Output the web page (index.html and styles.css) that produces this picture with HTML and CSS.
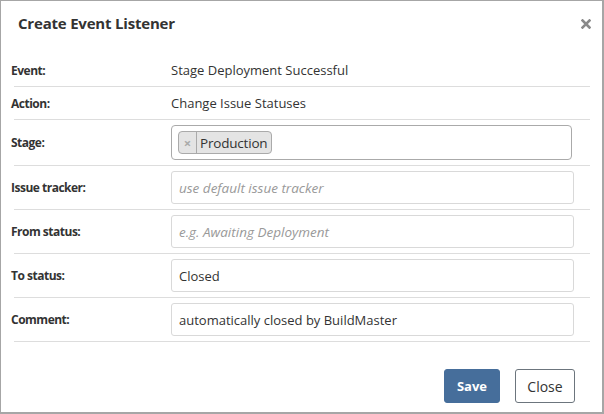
FILE: index.html
```html
<!DOCTYPE html>
<html>
<head>
<meta charset="utf-8">
<link rel="stylesheet" href="styles.css">
</head>
<body>
<div class="dialog">
  <div class="header">
    <h1 class="title">Create Event Listener</h1>
    <svg class="close-x" width="10" height="10" viewBox="0 0 10 10"><path d="M1.5 1.5 L8.5 8.5 M8.5 1.5 L1.5 8.5" stroke="#8a8a8a" stroke-width="2.6" stroke-linecap="square"/></svg>
  </div>
  <div class="body">
    <div class="row text-row">
      <label class="lbl">Event:</label>
      <div class="val">Stage Deployment Successful</div>
    </div>
    <div class="row text-row">
      <label class="lbl">Action:</label>
      <div class="val">Change Issue Statuses</div>
    </div>
    <div class="row">
      <label class="lbl">Stage:</label>
      <div class="val">
        <div class="multi">
          <span class="tag"><span class="tag-x">×</span><span class="tag-text">Production</span></span>
        </div>
      </div>
    </div>
    <div class="row">
      <label class="lbl">Issue tracker:</label>
      <div class="val"><div class="input placeholder">use default issue tracker</div></div>
    </div>
    <div class="row">
      <label class="lbl">From status:</label>
      <div class="val"><div class="input placeholder">e.g. Awaiting Deployment</div></div>
    </div>
    <div class="row">
      <label class="lbl">To status:</label>
      <div class="val"><div class="input">Closed</div></div>
    </div>
    <div class="row">
      <label class="lbl">Comment:</label>
      <div class="val"><div class="input">automatically closed by BuildMaster</div></div>
    </div>
  </div>
  <div class="footer">
    <button class="btn btn-primary">Save</button>
    <button class="btn btn-default">Close</button>
  </div>
</div>
</body>
</html>
```
FILE: styles.css
```css
* { box-sizing: border-box; }
html, body { margin: 0; padding: 0; background: #fff; }
body { font-family: "Open Sans", "Noto Sans", sans-serif; color: #333; }
.dialog {
  width: 604px;
  height: 414px;
  border: 1px solid #a6a6a6;
  border-bottom-width: 2px;
  border-right-width: 2px;
  display: flex;
  flex-direction: column;
}
.header {
  display: flex;
  align-items: center;
  justify-content: space-between;
  height: 44px;
  padding: 0 11px 0 17px;
}
.title {
  margin: 0;
  font-size: 15px;
  font-weight: bold;
  color: #333;
  letter-spacing: -0.2px;
}
.close-x {
  display: block;
  margin-top: 1px;
}
.body {
  padding: 9px 12px 0 13px;
}
.row {
  display: flex;
  align-items: center;
  padding: 5px 0;
  border-bottom: 1px solid #ddd;
}
.text-row { height: 33px; padding: 0; }
.lbl {
  width: 160px;
  margin-left: -3px;
  font-size: 12px;
  font-weight: bold;
  color: #333;
  letter-spacing: -0.5px;
}
.val {
  flex: 1;
  font-size: 13px;
  color: #333;
  padding-right: 16px;
}
.input {
  height: 33px;
  border: 1px solid #d9d9d9;
  border-radius: 3px;
  padding: 0 7px;
  display: flex;
  align-items: center;
  font-size: 13px;
}
.placeholder { color: #999; font-style: italic; font-size: 13.5px; }
.multi {
  height: 35px;
  border: 1px solid #aaa;
  border-radius: 4px;
  margin-right: 2px;
  display: flex;
  align-items: center;
  padding: 0 6px;
}
.tag {
  display: flex;
  align-items: center;
  height: 23px;
  background: #e4e4e4;
  border: 1px solid #aaa;
  border-radius: 4px;
  font-size: 13.5px;
}
.tag-x {
  color: #aaa;
  font-size: 13px;
  font-weight: bold;
  width: 18px;
  text-align: center;
  border-right: 1px solid #aaa;
  height: 100%;
  display: flex;
  align-items: center;
  justify-content: center;
}
.tag-text { padding: 0 4px 0 3px; color: #333; letter-spacing: -0.2px; }
.footer {
  display: flex;
  justify-content: flex-end;
  gap: 15px;
  padding: 27px 27px 0 0;
}
.btn {
  height: 34px;
  font-family: inherit;
  font-size: 13px;
  border-radius: 3px;
  cursor: pointer;
}
.btn-primary {
  width: 56px;
  background: #466e9b;
  border: 1px solid #466e9b;
  color: #fff;
  font-weight: bold;
}
.btn-default {
  width: 60px;
  background: #fff;
  border: 1px solid #6c757d;
  color: #333;
  font-size: 14px;
}
```
